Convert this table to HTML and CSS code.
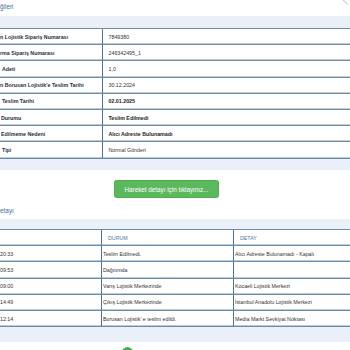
FILE: index.html
```html
<!DOCTYPE html>
<html lang="tr">
<head>
<meta charset="utf-8">
<link rel="stylesheet" href="styles.css">
</head>
<body>
<div class="page">
  <span class="close" aria-label="Kapat"></span>
  <div class="title t1">ğileri</div>
  <div class="panel">
    <div class="band band-top"></div>
    <div class="info">
      <div class="row"><div class="lbl">n Lojistik Sipariş Numarası</div><div class="val">7849380</div></div>
      <div class="row"><div class="lbl">rma Sipariş Numarası</div><div class="val">246342495_1</div></div>
      <div class="row"><div class="lbl in2">Adeti</div><div class="val">1,0</div></div>
      <div class="row"><div class="lbl">n Borusan Lojistik'e Teslim Tarihi</div><div class="val">30.12.2024</div></div>
      <div class="row"><div class="lbl in2">Teslim Tarihi</div><div class="val b">02.01.2025</div></div>
      <div class="row"><div class="lbl in1">Durumu</div><div class="val b">Teslim Edilmedi</div></div>
      <div class="row"><div class="lbl in1">Edilmeme Nedeni</div><div class="val b">Alıcı Adreste Bulunamadı</div></div>
      <div class="row"><div class="lbl in2">Tipi</div><div class="val">Normal Gönderi</div></div>
    </div>
    <div class="band band-bottom"></div>
  </div>
  <div class="actions"><button class="btn">Hareket detayı için tıklayınız...</button></div>
  <div class="title t2">etayı</div>
  <div class="panel">
    <div class="band band-top2"></div>
    <div class="moves">
      <div class="mrow head"><div></div><div>DURUM</div><div>DETAY</div></div>
      <div class="mrow"><div>20:33</div><div>Teslim Edilmedi.</div><div>Alıcı Adreste Bulunamadı - Kapalı</div></div>
      <div class="mrow"><div>09:53</div><div>Dağıtımda</div><div></div></div>
      <div class="mrow"><div>09:00</div><div>Varış Lojistik Merkezinde</div><div>Kocaeli Lojistik Merkezi</div></div>
      <div class="mrow"><div>14:49</div><div>Çıkış Lojistik Merkezinde</div><div>İstanbul Anadolu Lojistik Merkezi</div></div>
      <div class="mrow"><div>12:14</div><div>Borusan Lojistik' e teslim edildi.</div><div>Media Markt Sevkiyat Noktası</div></div>
    </div>
    <div class="band band-bottom2"></div>
  </div>
  <div class="loader"><span class="dot"></span></div>
</div>
</body>
</html>
```
FILE: styles.css
```css
html, body {
  margin: 0;
  padding: 0;
  background: #ffffff;
  overflow: hidden;
}
body {
  width: 350px;
  height: 350px;
  font-family: "Liberation Sans", Arial, sans-serif;
  font-size: 5.3px;
  color: #333333;
}
.page {
  position: relative;
  width: 350px;
}
.close {
  position: absolute;
  right: 1px;
  top: -3px;
  width: 9px;
  height: 9px;
}
.close::before {
  content: "";
  position: absolute;
  left: 0;
  top: 4px;
  width: 9px;
  height: 1.2px;
  background: #cccccc;
  transform: rotate(45deg);
}
.title {
  color: #3f6f98;
  font-size: 6.4px;
  line-height: 8px;
}
.t1 {
  height: 16px;
  padding-top: 3px;
  box-sizing: border-box;
}
.t2 {
  height: 21px;
  padding-top: 9px;
  box-sizing: border-box;
}
.band {
  background: #e9f0f7;
}
.band-top { height: 12px; }
.band-bottom { height: 11.5px; }
.band-top2 { height: 10px; }
.band-bottom2 { height: 15px; }
.info, .moves {
  border-top: 1px solid #6f8ca3;
  background: #ffffff;
}
.row, .mrow {
  display: grid;
  height: 16.2px;
  box-sizing: border-box;
  border-bottom: 1px solid #6f8ca3;
  box-shadow: inset 0 -1px 0 #b9cad8;
}
.row {
  grid-template-columns: 101.5px 1fr;
}
.mrow {
  grid-template-columns: 101px 132px 1fr;
}
.row > div, .mrow > div {
  display: flex;
  align-items: center;
  justify-content: flex-start;
  white-space: nowrap;
  overflow: hidden;
  padding: 0;
}
.row > .val {
  border-left: 1px solid #50708c;
  padding-left: 6px;
}
.lbl {
  font-weight: bold;
  color: #1d2e42;
}
.row > .in1 { padding-left: 1px; }
.row > .in2 { padding-left: 2px; }
.b { font-weight: bold; color: #222; }
.actions {
  padding: 10px 0 0 114px;
  height: 28px;
  box-sizing: border-box;
}
.btn {
  display: block;
  width: 105px;
  height: 18px;
  padding: 0;
  border: 1px solid #4cae4c;
  border-radius: 2.5px;
  background: #5cb85c;
  color: #ffffff;
  font-family: "Liberation Sans", Arial, sans-serif;
  font-size: 6.3px;
}
.mrow > div + div {
  border-left: 1px solid #50708c;
  padding-left: 1px;
}
.mrow.head > div {
  color: #4a78a2;
}
.mrow.head > div + div {
  padding-left: 6px;
}
.loader {
  padding: 5px 0 0 122px;
}
.dot {
  display: block;
  width: 11px;
  height: 11px;
  border-radius: 50%;
  background: #4cae4c;
}
```
